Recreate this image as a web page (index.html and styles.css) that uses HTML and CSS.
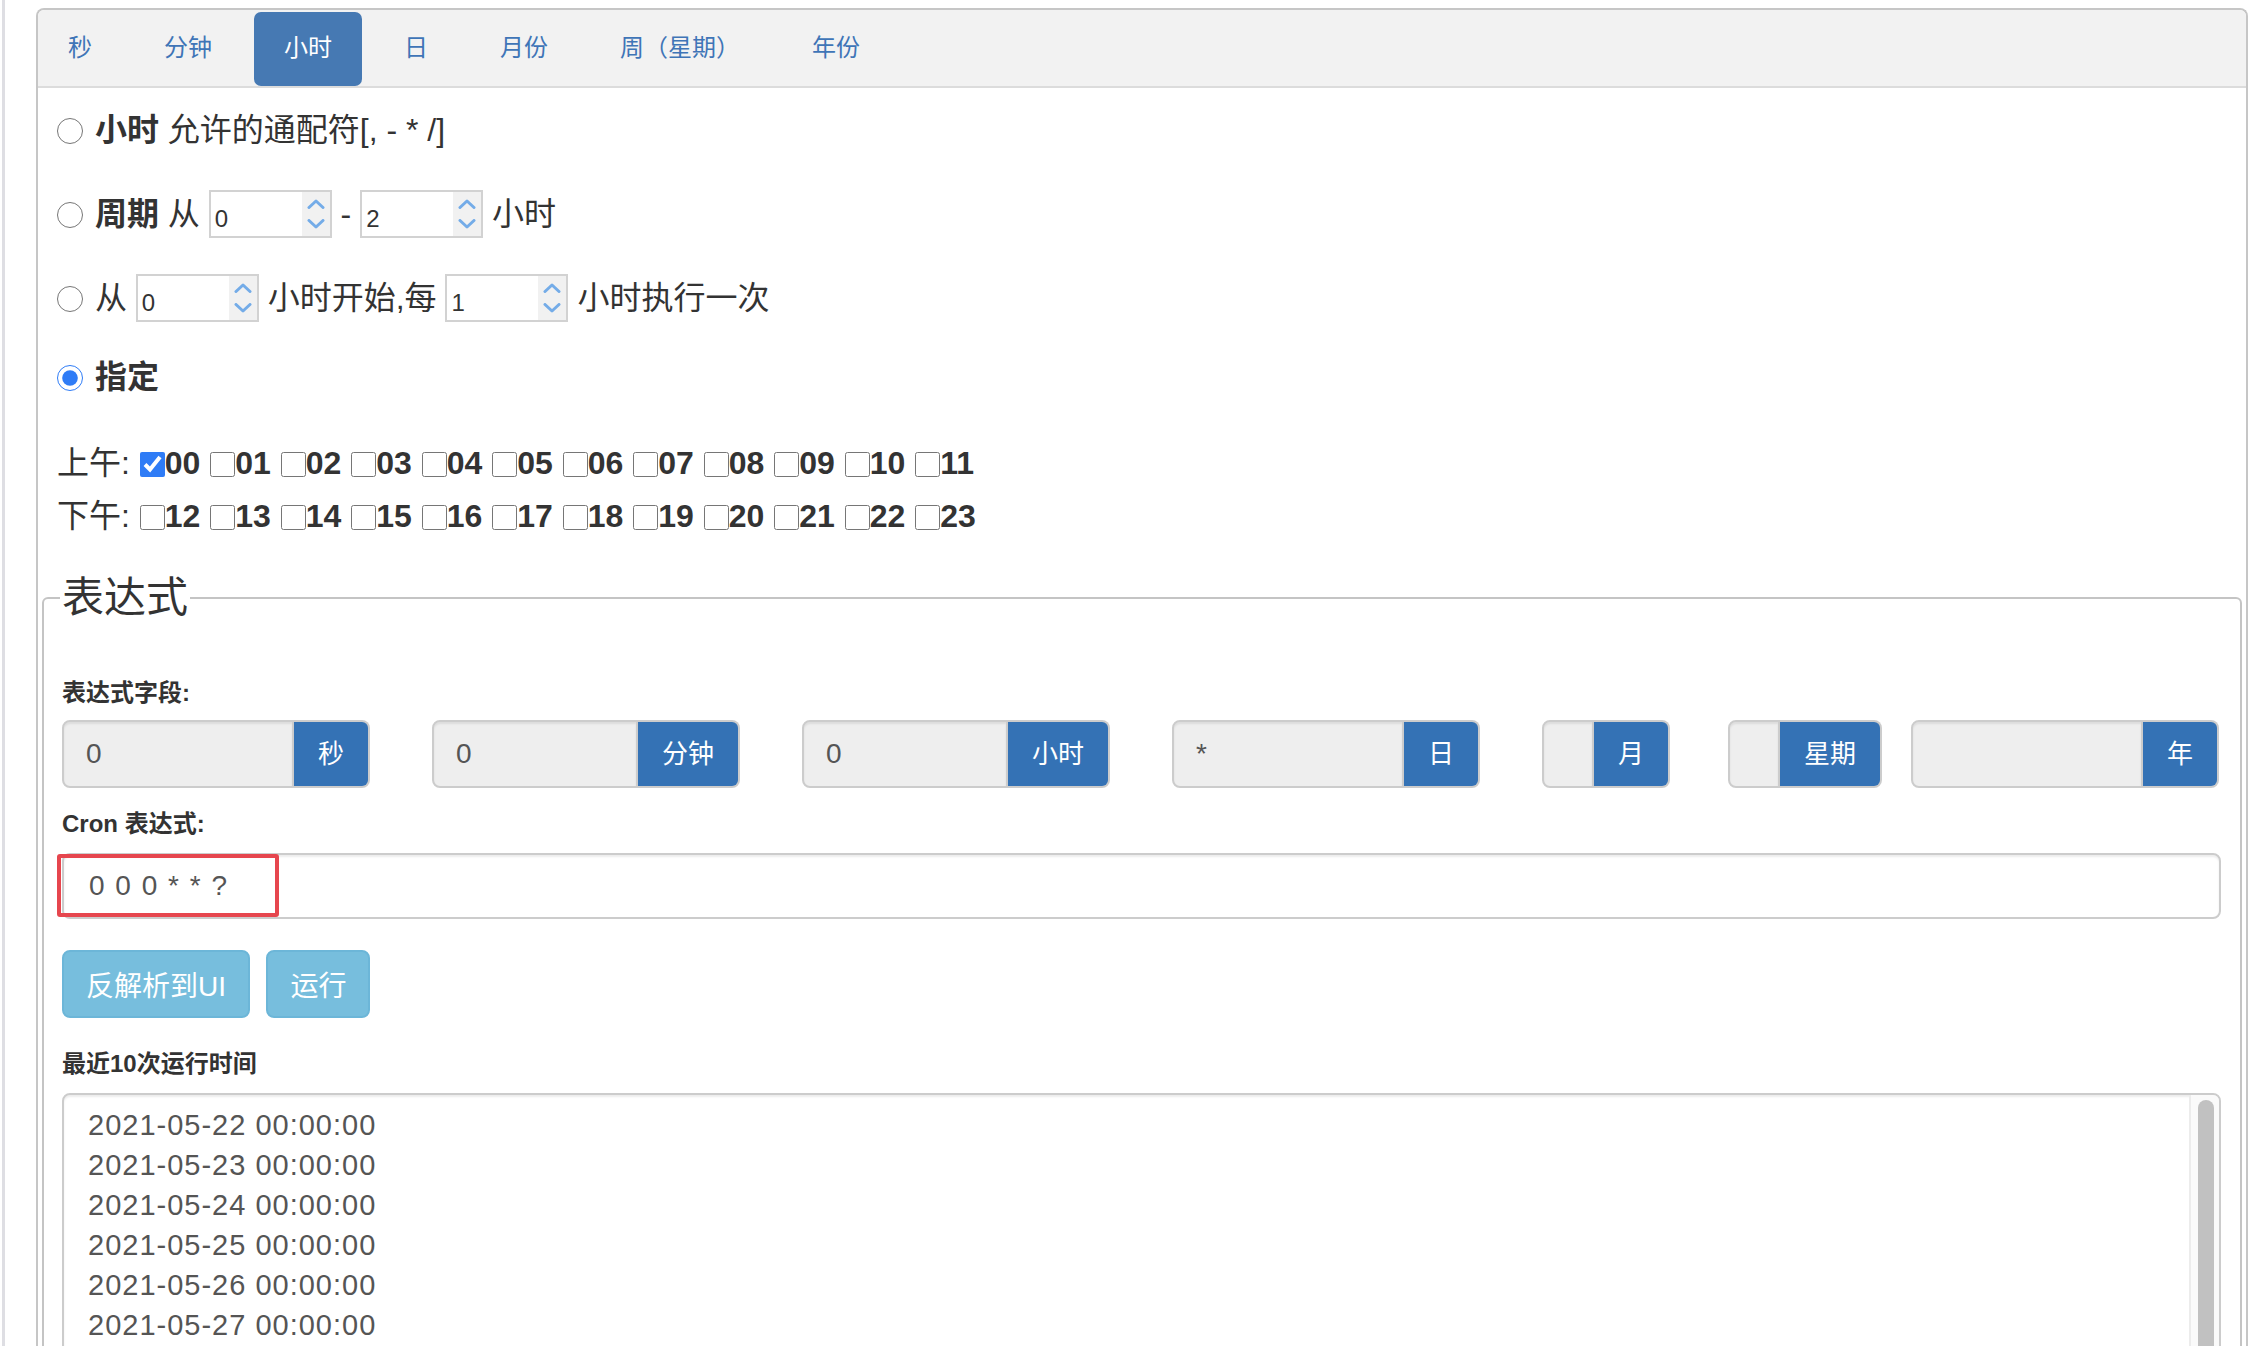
FILE: index.html
```html
<!DOCTYPE html>
<html lang="zh-CN">
<head>
<meta charset="UTF-8" />
<meta name="viewport" content="width=device-width, initial-scale=1" />
<title>Cron 表达式生成器</title>
<link rel="stylesheet" href="styles.css">
</head>
<body>

<div class="page">
  <div class="panel">

    <!-- Tabs -->
    <ul class="tabs">
      <li>秒</li>
      <li>分钟</li>
      <li class="active">小时</li>
      <li>日</li>
      <li>月份</li>
      <li>周（星期）</li>
      <li>年份</li>
    </ul>

    <!-- Hour tab -->
    <div class="tab-body">
      <div class="line gap-36">
        <label><input type="radio" name="hour"> <b>小时</b> 允许的通配符[, - * /]</label>
      </div>
      <div class="line gap-36">
        <label><input type="radio" name="hour"> <b>周期</b> 从 <span class="spin"><input class="spin-input" value="0"><span class="spin-btns"><svg width="18" height="10" viewBox="0 0 18 10"><polyline points="2,8.5 9,2 16,8.5"/></svg><svg width="18" height="10" viewBox="0 0 18 10"><polyline points="2,1.5 9,8 16,1.5"/></svg></span></span> - <span class="spin"><input class="spin-input" value="2"><span class="spin-btns"><svg width="18" height="10" viewBox="0 0 18 10"><polyline points="2,8.5 9,2 16,8.5"/></svg><svg width="18" height="10" viewBox="0 0 18 10"><polyline points="2,1.5 9,8 16,1.5"/></svg></span></span> 小时</label>
      </div>
      <div class="line gap-31">
        <label><input type="radio" name="hour"> 从 <span class="spin"><input class="spin-input" value="0"><span class="spin-btns"><svg width="18" height="10" viewBox="0 0 18 10"><polyline points="2,8.5 9,2 16,8.5"/></svg><svg width="18" height="10" viewBox="0 0 18 10"><polyline points="2,1.5 9,8 16,1.5"/></svg></span></span> 小时开始,每 <span class="spin"><input class="spin-input" value="1"><span class="spin-btns"><svg width="18" height="10" viewBox="0 0 18 10"><polyline points="2,8.5 9,2 16,8.5"/></svg><svg width="18" height="10" viewBox="0 0 18 10"><polyline points="2,1.5 9,8 16,1.5"/></svg></span></span> 小时执行一次</label>
      </div>
      <div class="line gap-38">
        <label><input type="radio" name="hour" checked> <b>指定</b></label>
      </div>
      <div class="line gap-5">
        上午: <label><input type="checkbox" checked><b>00</b></label> <label><input type="checkbox"><b>01</b></label> <label><input type="checkbox"><b>02</b></label> <label><input type="checkbox"><b>03</b></label> <label><input type="checkbox"><b>04</b></label> <label><input type="checkbox"><b>05</b></label> <label><input type="checkbox"><b>06</b></label> <label><input type="checkbox"><b>07</b></label> <label><input type="checkbox"><b>08</b></label> <label><input type="checkbox"><b>09</b></label> <label><input type="checkbox"><b>10</b></label> <label><input type="checkbox"><b>11</b></label>
      </div>
      <div class="line">
        下午: <label><input type="checkbox"><b>12</b></label> <label><input type="checkbox"><b>13</b></label> <label><input type="checkbox"><b>14</b></label> <label><input type="checkbox"><b>15</b></label> <label><input type="checkbox"><b>16</b></label> <label><input type="checkbox"><b>17</b></label> <label><input type="checkbox"><b>18</b></label> <label><input type="checkbox"><b>19</b></label> <label><input type="checkbox"><b>20</b></label> <label><input type="checkbox"><b>21</b></label> <label><input type="checkbox"><b>22</b></label> <label><input type="checkbox"><b>23</b></label>
      </div>
    </div>

    <!-- Expression -->
    <fieldset class="expr">
      <legend>表达式</legend>

      <div class="f-label first">表达式字段:</div>
      <div class="fields">
        <div class="ig"><input class="ig-input" value="0" readonly><span class="ig-addon">秒</span></div>
        <div class="ig"><input class="ig-input" value="0" readonly><span class="ig-addon">分钟</span></div>
        <div class="ig"><input class="ig-input" value="0" readonly><span class="ig-addon">小时</span></div>
        <div class="ig"><input class="ig-input" value="*" readonly><span class="ig-addon">日</span></div>
        <div class="ig ig-narrow ig-month"><input class="ig-input" value="" readonly><span class="ig-addon">月</span></div>
        <div class="ig ig-narrow ig-week"><input class="ig-input" value="" readonly><span class="ig-addon">星期</span></div>
        <div class="ig ig-last"><input class="ig-input" value="" readonly><span class="ig-addon">年</span></div>
      </div>

      <div class="f-label cron-label">Cron 表达式:</div>
      <div class="cron-wrap">
        <input class="cron-input" value="0 0 0 * * ?">
        <span class="mark"></span>
      </div>

      <div class="actions">
        <button type="button" class="btn">反解析到UI</button>
        <button type="button" class="btn">运行</button>
      </div>

      <div class="f-label">最近10次运行时间</div>
      <div class="runs">
        <div class="runs-text">
          <div>2021-05-22 00:00:00</div>
          <div>2021-05-23 00:00:00</div>
          <div>2021-05-24 00:00:00</div>
          <div>2021-05-25 00:00:00</div>
          <div>2021-05-26 00:00:00</div>
          <div>2021-05-27 00:00:00</div>
        </div>
        <div class="scroll"><span class="thumb"></span></div>
      </div>
    </fieldset>

  </div>
</div>

</body>
</html>
```

FILE: styles.css
```css
html, body {
  margin: 0;
  padding: 0;
  height: 100%;
  overflow: hidden;
  background: #fff;
}
body {
  font-family: "Liberation Sans", "Noto Sans CJK SC", sans-serif;
  color: #333;
}
.page {
  margin-left: 2px;
  border-left: 3px solid #dedee3;
  padding: 8px 18px 0 31px;
  min-height: 1400px;
}
.panel {
  border: 2px solid #c6c6c6;
  border-bottom: none;
  border-radius: 8px 8px 0 0;
  min-height: 1400px;
  overflow: hidden;
}

/* tabs */
.tabs {
  list-style: none;
  margin: 0;
  padding: 2px 0 0 0;
  height: 78px;
  box-sizing: border-box;
  display: flex;
  gap: 12px;
  background: #f2f2f2;
  border-bottom: 2px solid #dcdcdc;
}
.tabs li {
  padding: 0 30px;
  line-height: 72px;
  font-size: 24px;
  color: #3f75b7;
  border-radius: 7px;
}
.tabs li.active {
  background: #4679b3;
  color: #fff;
}

/* hour tab */
.tab-body {
  padding: 18px 19px 0 19px;
}
.line {
  height: 48px;
  line-height: 48px;
  font-size: 32px;
  white-space: nowrap;
  color: #333;
}
.gap-36 { margin-bottom: 36px; }
.gap-31 { margin-bottom: 31px; }
.gap-38 { margin-bottom: 38px; }
.gap-5 { margin-bottom: 5px; }
.line b {
  font-weight: bold;
}
.line input[type="radio"] {
  width: 26px;
  height: 26px;
  margin: 0 3px 0 0;
  vertical-align: -3px;
  accent-color: #2f7cf6;
}
.line input[type="checkbox"] {
  width: 25px;
  height: 25px;
  margin: 0 0 0 1px;
  vertical-align: -3px;
  accent-color: #2f7cf6;
}
.spin {
  display: inline-flex;
  width: 123px;
  height: 48px;
  box-sizing: border-box;
  border: 2px solid #d2d2d2;
  background: #fff;
  vertical-align: middle;
  margin-top: -6px;
}
.spin-input {
  flex: 1;
  min-width: 0;
  border: 0;
  outline: none;
  padding: 10px 0 0 4px;
  font-family: "Liberation Sans", sans-serif;
  font-size: 24px;
  color: #333;
  background: transparent;
}
.spin-btns {
  width: 28px;
  background: #f1f1f1;
  display: flex;
  flex-direction: column;
  align-items: center;
  justify-content: center;
  gap: 10px;
}
.spin-btns svg {
  display: block;
}
.spin-btns polyline {
  fill: none;
  stroke: #74ace8;
  stroke-width: 3;
  stroke-linecap: round;
  stroke-linejoin: round;
}

/* expression fieldset */
.expr {
  margin: 33px 4px 0 4px;
  padding: 0 19px 0 18px;
  border: 2px solid #c4c4c4;
  border-radius: 6px;
  min-width: 0;
  min-height: 900px;
}
.expr legend {
  font-size: 42px;
  line-height: 50px;
  padding: 0 2px;
  margin-left: -2px;
  color: #333;
}
.f-label {
  font-size: 24px;
  font-weight: bold;
  line-height: 34px;
  color: #333;
  margin: 29px 0 12px 0;
}
.f-label.first {
  margin: 53px 0 10px 0;
}
.f-label.cron-label {
  margin: 19px 0 12px 0;
}
.fields {
  display: flex;
}
.ig {
  display: flex;
  flex-shrink: 0;
  width: 308px;
  height: 68px;
  margin-right: 62px;
}
.ig-narrow { width: auto; }
.ig-month { margin-right: 58px; }
.ig-week { margin-right: 29px; }
.ig-last { margin-right: 0; }
.ig-input {
  flex: 1;
  min-width: 0;
  width: 0;
  height: 68px;
  box-sizing: border-box;
  border: 2px solid #ccc;
  border-radius: 8px 0 0 8px;
  background: #eee;
  box-shadow: inset 0 2px 2px rgba(0,0,0,0.075);
  padding: 0 22px;
  font-family: "Liberation Sans", sans-serif;
  font-size: 28px;
  color: #555;
  outline: none;
}
.ig-narrow .ig-input {
  flex: none;
  width: 52px;
}
.ig-addon {
  flex-shrink: 0;
  white-space: nowrap;
  box-sizing: border-box;
  height: 68px;
  padding: 0 24px;
  line-height: 64px;
  background: #3472b5;
  color: #fff;
  font-size: 26px;
  border: 2px solid #ccc;
  border-left: 0;
  border-radius: 0 8px 8px 0;
}
.cron-wrap {
  position: relative;
}
.cron-input {
  display: block;
  width: 100%;
  height: 66px;
  box-sizing: border-box;
  border: 2px solid #ccc;
  border-radius: 8px;
  box-shadow: inset 0 2px 2px rgba(0,0,0,0.075);
  padding: 0 25px;
  font-family: "Liberation Sans", sans-serif;
  font-size: 28px;
  letter-spacing: 1.5px;
  color: #555;
  outline: none;
}
.mark {
  position: absolute;
  left: -5px;
  top: 1px;
  width: 222px;
  height: 63px;
  box-sizing: border-box;
  border: 4px solid #e6464e;
  border-radius: 3px;
}
.actions {
  margin-top: 31px;
}
.btn {
  height: 68px;
  padding: 0 22px;
  margin: 0 12px 0 0;
  background: #77bedd;
  border: 2px solid #6cb6d8;
  border-radius: 8px;
  color: #fff;
  font-family: "Liberation Sans", "Noto Sans CJK SC", sans-serif;
  font-size: 28px;
  vertical-align: top;
}

/* run times */
.runs {
  display: flex;
  height: 380px;
  box-sizing: border-box;
  border: 2px solid #ccc;
  border-radius: 8px;
  box-shadow: inset 0 2px 2px rgba(0,0,0,0.075);
  overflow: hidden;
}
.runs-text {
  flex: 1;
  padding: 10px 24px;
  font-family: "Liberation Sans", sans-serif;
  font-size: 29px;
  line-height: 40px;
  letter-spacing: 1px;
  color: #555;
}
.scroll {
  width: 30px;
  box-sizing: border-box;
  background: #fafafa;
  border-left: 2px solid #ececec;
  padding: 5px 5px 0 7px;
}
.thumb {
  display: block;
  height: 600px;
  background: #c1c1c1;
  border-radius: 8px;
}
```
